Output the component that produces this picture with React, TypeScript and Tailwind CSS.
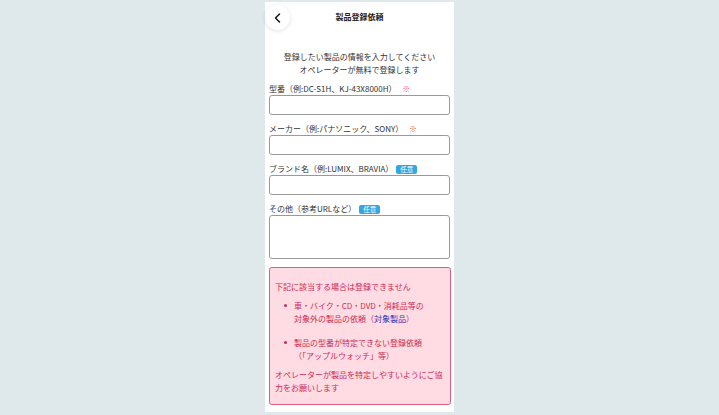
import React from "react";

const font = { fontFamily: '"Noto Sans CJK JP", "Noto Sans", sans-serif' };

function Label({ text, badge }: { text: string; badge: "req" | "opt" }) {
  return (
    <div className="flex items-center h-[10px] leading-[10px] text-[8px] text-[#333]">
      <span>{text}</span>
      {badge === "req" ? (
        <span className="ml-[6px] text-[7.5px] text-[#e8505b]">※</span>
      ) : (
        <span className="ml-[3px] inline-flex items-center justify-center h-[9px] px-[4px] rounded-[2px] bg-[#35a6e0] text-white text-[6.5px] leading-none">
          任意
        </span>
      )}
    </div>
  );
}

export default function App() {
  return (
    <div className="min-h-[415px] bg-[#dfe9eb] pt-[2px]" style={font}>
      <div className="mx-auto w-[189px] h-[410px] bg-white px-[4px]">
        <div className="relative h-[32px] flex items-center justify-center">
          <div className="absolute left-[-4px] top-[3px] w-[25px] h-[25px] rounded-full bg-white shadow-[0_1px_4px_rgba(0,0,0,0.12)] flex items-center justify-center">
            <svg width="12" height="12" viewBox="0 0 24 24" fill="none" stroke="#111" strokeWidth="3" strokeLinecap="round" strokeLinejoin="round">
              <path d="M15 4 L7 12 L15 20" />
            </svg>
          </div>
          <span className="text-[8px] font-bold text-[#222] mb-[2px]">製品登録依頼</span>
        </div>

        <div className="mt-[16px] text-center text-[8px] leading-[13px] text-[#333]">
          <div>登録したい製品の情報を入力してください</div>
          <div>オペレーターが無料で登録します</div>
        </div>

        <div className="mt-[8px]">
          <Label text="型番（例:DC-S1H、KJ-43X8000H）" badge="req" />
          <div className="mt-[1px] h-[20px] w-[181px] rounded-[3px] border border-[#9a9a9a]" />
        </div>
        <div className="mt-[9px]">
          <Label text="メーカー（例:パナソニック、SONY）" badge="req" />
          <div className="mt-[1px] h-[20px] w-[181px] rounded-[3px] border border-[#9a9a9a]" />
        </div>
        <div className="mt-[9px]">
          <Label text="ブランド名（例:LUMIX、BRAVIA）" badge="opt" />
          <div className="mt-[1px] h-[20px] w-[181px] rounded-[3px] border border-[#9a9a9a]" />
        </div>
        <div className="mt-[9px]">
          <Label text="その他（参考URLなど）" badge="opt" />
          <div className="mt-[1px] h-[44px] w-[181px] rounded-[3px] border border-[#9a9a9a]" />
        </div>

        <div className="mt-[8px] w-[182px] h-[138px] rounded-[3px] border-[1.5px] border-[#d8627e] bg-[#ffdbe3] pt-[12px] px-[5px] text-[8px] leading-[13px] text-[#c92b55]">
          <div>下記に該当する場合は登録できません</div>
          <div className="mt-[6px] pl-[19px] relative">
            <span className="absolute left-[9px] top-[5px] w-[3px] h-[3px] rounded-full bg-[#c92b55]" />
            <div>車・バイク・CD・DVD・消耗品等の</div>
            <div>
              対象外の製品の依頼（<span className="text-[#2436b5]">対象製品</span>）
            </div>
          </div>
          <div className="mt-[11px] pl-[19px] relative">
            <span className="absolute left-[9px] top-[5px] w-[3px] h-[3px] rounded-full bg-[#c92b55]" />
            <div>製品の型番が特定できない登録依頼</div>
            <div>（「アップルウォッチ」等）</div>
          </div>
          <div className="mt-[6px]">
            <div>オペレーターが製品を特定しやすいようにご協</div>
            <div>力をお願いします</div>
          </div>
        </div>
      </div>
    </div>
  );
}
